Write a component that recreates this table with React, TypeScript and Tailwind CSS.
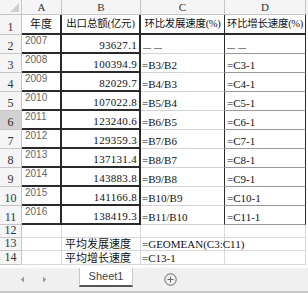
import React from "react";

const serif = { fontFamily: '"Liberation Serif", "Noto Sans CJK SC", serif' };
const sans = { fontFamily: '"Liberation Sans", "Noto Sans CJK SC", sans-serif' };

const data = [
  ["2007", "93627.1", "——", "——"],
  ["2008", "100394.9", "=B3/B2", "=C3-1"],
  ["2009", "82029.7", "=B4/B3", "=C4-1"],
  ["2010", "107022.8", "=B5/B4", "=C5-1"],
  ["2011", "123240.6", "=B6/B5", "=C6-1"],
  ["2012", "129359.3", "=B7/B6", "=C7-1"],
  ["2013", "137131.4", "=B8/B7", "=C8-1"],
  ["2014", "143883.8", "=B9/B8", "=C9-1"],
  ["2015", "141166.8", "=B10/B9", "=C10-1"],
  ["2016", "138419.3", "=B11/B10", "=C11-1"],
];

function RowHead({ n, h, selected }: { n: number; h: string; selected?: boolean }) {
  return (
    <div
      className={`${h} flex items-end justify-center border-b border-r border-[#c6c6c6] pb-px text-[12px] leading-none ${
        selected ? "bg-[#d2d2d2] text-[#222]" : "bg-[#f5f5f5] text-[#333]"
      }`}
      style={serif}
    >
      {n}
    </div>
  );
}

export default function App() {
  return (
    <div className="h-[293px] w-[308px] overflow-hidden bg-white">
      <div className="grid grid-cols-[22px_40px_79px_84px_81px_2px]">
        {/* column headers */}
        <div className="relative h-[15px] border-b border-r border-[#c6c6c6] bg-[#f5f5f5]">
          <svg className="absolute bottom-[2px] right-[2px]" width="9" height="9" viewBox="0 0 9 9">
            <path d="M9 0 L9 9 L0 9 Z" fill="#cfcfcf" />
          </svg>
        </div>
        {["A", "B", "C", "D"].map((c) => (
          <div
            key={c}
            className="flex h-[15px] items-center justify-center border-b border-r border-[#c6c6c6] bg-[#f5f5f5] text-[11px] text-[#333]"
            style={serif}
          >
            {c}
          </div>
        ))}
        <div className="h-[15px] border-b border-[#c6c6c6] bg-[#f5f5f5]" />

        {/* row 1 */}
        <RowHead n={1} h="h-[20px]" />
        <div className="flex h-[20px] items-center justify-center border-b-2 border-r-2 border-[#2a2a2a] text-[11px] text-[#111]" style={serif}>
          年度
        </div>
        <div className="flex h-[20px] items-center justify-center whitespace-nowrap border-b-2 border-r-2 border-[#2a2a2a] text-[10.5px] tracking-[-0.2px] text-[#111]" style={serif}>
          出口总额(亿元)
        </div>
        <div className="flex h-[20px] items-center justify-center whitespace-nowrap border-b-2 border-r border-[#2a2a2a] text-[10.5px] tracking-[-0.3px] text-[#111]" style={serif}>
          环比发展速度(%)
        </div>
        <div className="flex h-[20px] items-center justify-center whitespace-nowrap border-b-2 border-r border-[#2a2a2a] text-[10.5px] tracking-[-0.3px] text-[#111]" style={serif}>
          环比增长速度(%)
        </div>
        <div className="h-[20px]" />

        {/* data rows */}
        {data.map((r, i) => (
          <React.Fragment key={r[0]}>
            <RowHead n={i + 2} h="h-[19px]" selected={i === 4} />
            <div className="h-[19px] border-b-2 border-r-2 border-[#2a2a2a] pl-[3px] pt-px text-[10px] leading-none text-[#666]" style={sans}>
              {r[0]}
            </div>
            <div className="flex h-[19px] items-end justify-end border-b-2 border-r-2 border-[#2a2a2a] pb-px pr-[2px] text-[11px] leading-none tracking-[0.3px] text-[#111]" style={serif}>
              {r[1]}
            </div>
            <div
              className={`flex h-[19px] items-end border-b border-r border-b-[#d4d4d4] border-r-[#2a2a2a] pb-px pl-[1px] leading-none text-[#111] ${
                i === 0 ? "pb-[3px] pl-[2px] text-[8px] tracking-[3px]" : "text-[11px]"
              }`}
              style={serif}
            >
              {r[2]}
            </div>
            <div
              className={`flex h-[19px] items-end border-b border-r border-b-[#9a9a9a] border-r-[#2a2a2a] pb-px pl-[2px] leading-none text-[#111] ${
                i === 0 ? "pb-[3px] text-[8px] tracking-[3px]" : "text-[11px]"
              }`}
              style={serif}
            >
              {r[3]}
            </div>
            <div className="h-[19px]" />
          </React.Fragment>
        ))}

        {/* rows 12-14 */}
        {[
          { n: 12, h: "h-[13px]", b: "", c: "" },
          { n: 13, h: "h-[13px]", b: "平均发展速度", c: "=GEOMEAN(C3:C11)" },
          { n: 14, h: "h-[14px]", b: "平均增长速度", c: "=C13-1" },
        ].map((r) => (
          <React.Fragment key={r.n}>
            <RowHead n={r.n} h={r.h} />
            <div className={`${r.h} border-b border-r border-[#d9d9d9]`} />
            <div className={`${r.h} flex items-end whitespace-nowrap border-b border-r border-[#d9d9d9] pl-[3px] text-[11px] leading-none text-[#111]`} style={serif}>
              {r.b}
            </div>
            <div className={`${r.h} relative border-b border-r border-[#d9d9d9]`}>
              <span className="absolute bottom-0 left-[1px] whitespace-nowrap text-[11px] leading-none text-[#111]" style={serif}>
                {r.c}
              </span>
            </div>
            <div className={`${r.h} border-b border-r border-[#d9d9d9]`} />
            <div className={r.h} />
          </React.Fragment>
        ))}
      </div>

      {/* sheet tab bar */}
      <div className="mt-[3px] flex h-[25px] items-stretch border-b-2 border-[#c8c8c8] bg-[#f0f0f0]">
        <div className="flex w-[79px] items-center gap-[17px] pl-[20px]">
          <svg width="5" height="7" viewBox="0 0 5 7">
            <path d="M4 0.5 L0.8 3.5 L4 6.5 Z" fill="#9a9a9a" />
          </svg>
          <svg width="5" height="7" viewBox="0 0 5 7">
            <path d="M1 0.5 L4.2 3.5 L1 6.5 Z" fill="#9a9a9a" />
          </svg>
        </div>
        <div
          className="mb-[4px] flex w-[54px] items-center justify-center border-x border-b-2 border-x-[#c8c8c8] border-b-[#555] bg-white text-[11px] text-[#444]"
          style={sans}
        >
          Sheet1
        </div>
        <div className="flex items-center pl-[31px]">
          <svg width="13" height="13" viewBox="0 0 13 13">
            <circle cx="6.5" cy="6.5" r="5.7" fill="none" stroke="#666" strokeWidth="1" />
            <path d="M6.5 3.5 V9.5 M3.5 6.5 H9.5" stroke="#666" strokeWidth="1" />
          </svg>
        </div>
      </div>
    </div>
  );
}
